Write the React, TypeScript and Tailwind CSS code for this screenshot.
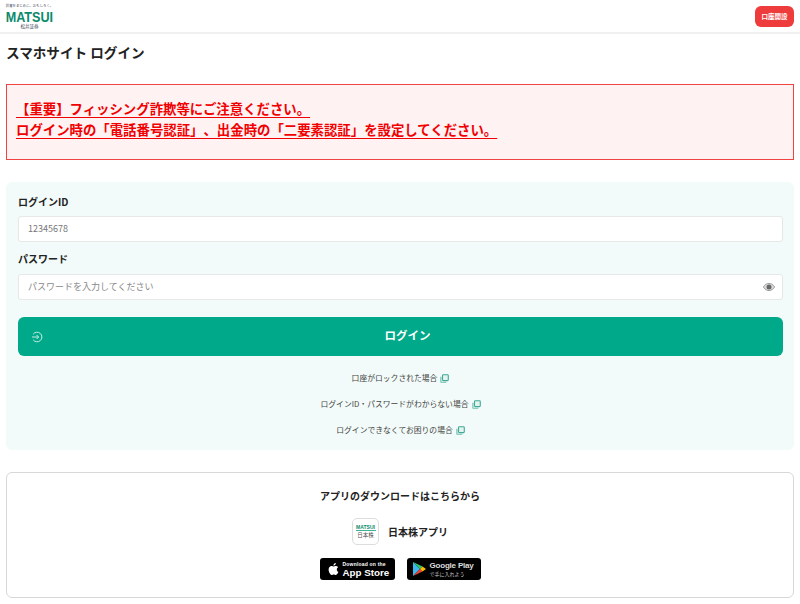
import React from 'react';

const FONT = "font-['Noto_Sans_CJK_JP','Liberation_Sans',sans-serif]";

const CopyIcon = () => (
  <svg className="w-[9px] h-[9px] ml-[3px] inline-block" viewBox="0 0 10 10" fill="none">
    <path d="M1 3v5.500a.7.7 0 0 0 .7.7H7" stroke="#6fbfae" strokeWidth="1.300" />
    <rect x="2.800" y="0.800" width="6.400" height="6.600" rx="1" stroke="#3ea996" strokeWidth="1.200" fill="#e4f3ef" />
  </svg>
);

const LoginIcon = () => (
  <svg className="w-[12px] h-[12px]" viewBox="0 0 12 12" fill="none" stroke="#c8eee4" strokeWidth="1">
    <path d="M2.200 3.200A4.800 4.800 0 1 1 2.200 8.800" />
    <path d="M1 6h6.600M5.600 4l2 2-2 2" />
  </svg>
);

const EyeIcon = () => (
  <svg className="w-[12px] h-[8px]" viewBox="0 0 12 8">
    <path d="M0.400 4C2 1.400 4 .4 6 .4s4 1 5.600 3.600C10 6.600 8 7.600 6 7.600S2 6.600.4 4z" fill="#ddd" stroke="#888" strokeWidth="0.800" />
    <circle cx="6" cy="4" r="2.500" fill="#666" />
  </svg>
);

const Logo = () => (
  <div className="flex flex-col items-center w-[47px] self-start pt-[4px]">
    <span className="text-[3.300px] leading-[4px] tracking-[0.100px] text-gray-700 whitespace-nowrap">投資をまじめに、おもしろく。</span>
    <span className="mt-[2px] font-['Liberation_Sans'] font-bold text-[14px] leading-[14px] text-[#0b8a6c] [transform:scale(0.900,1.060)] whitespace-nowrap">MATSUI</span>
    <span className="text-[4.500px] leading-[5px] text-gray-700">松井証券</span>
  </div>
);

const links = ['口座がロックされた場合', 'ログインID・パスワードがわからない場合', 'ログインできなくてお困りの場合'];

export default function App() {
  return (
    <div className={`${FONT} [text-spacing-trim:space-all] bg-white text-[#222] h-[604px] overflow-hidden`}>
      {/* Header */}
      <header className="h-[34px] border-b-2 border-[#f0f0f0] flex items-center justify-between pl-[6px] pr-[6px]">
        <Logo />
        <button className="w-[39px] h-[21px] mt-[1px] rounded-[6px] bg-[#ee3b3b] text-white text-[6.500px] font-bold leading-none">口座開設</button>
      </header>

      <main className="px-[6px]">
        <h1 className="text-[13.600px] font-bold leading-[20px] mt-[8px]">スマホサイト ログイン</h1>

        {/* Alert */}
        <div className="mt-[22px] h-[76px] border border-[#ee4444] bg-[#fff2f3] px-[9px] flex flex-col justify-center pb-[6px] text-[13.400px] font-bold leading-[21px] text-[#f00000]">
          <p className="underline underline-offset-[3px] decoration-1">【重要】フィッシング詐欺等にご注意ください。</p>
          <p className="underline underline-offset-[3px] decoration-1">ログイン時の「電話番号認証」、出金時の「二要素認証」を設定してください。</p>
        </div>

        {/* Login form */}
        <section className="mt-[22px] h-[268px] rounded-[6px] bg-[#f2fbf9] pl-[12px] pr-[11px] pt-[12px]">
          <label className="block text-[10px] font-bold leading-[16px]">ログインID</label>
          <div className="mt-[6px] h-[26px] rounded-[3px] border border-[#e6e8e8] bg-white px-[9px] flex items-center text-[9px] text-[#777]">12345678</div>
          <label className="block mt-[9px] text-[10px] font-bold leading-[16px]">パスワード</label>
          <div className="mt-[7px] h-[26px] rounded-[3px] border border-[#e6e8e8] bg-white pl-[9px] pr-[7px] flex items-center justify-between text-[9px] text-[#888]">
            <span>パスワードを入力してください</span>
            <EyeIcon />
          </div>
          <button className="relative mt-[17px] w-full h-[39px] rounded-[6px] bg-[#00a98a] text-white text-[11.500px] font-bold flex items-center justify-center pl-[14px] pb-[1px]">
            <span className="absolute left-[13px] top-[14px]"><LoginIcon /></span>
            ログイン
          </button>
          <ul className="mt-[14px] flex flex-col gap-[10px] text-[7.800px] text-[#444] leading-[16px] text-center">
            {links.map(l => (
              <li key={l}>{l}<CopyIcon /></li>
            ))}
          </ul>
        </section>

        {/* App download */}
        <section className="mt-[22px] h-[126px] rounded-[6px] border border-[#d8d8d8] flex flex-col items-center pt-[15px]">
          <p className="text-[10px] font-bold leading-[16px]">アプリのダウンロードはこちらから</p>
          <div className="mt-[14px] flex items-center gap-[9px]">
            <div className="w-[27px] h-[27px] rounded-[5px] border border-[#ddd] bg-white flex flex-col items-center justify-center">
              <span className="font-['Liberation_Sans'] font-bold text-[5px] leading-[6px] text-[#0b8a6c]">MATSUI</span>
              <span className="w-[20px] h-[1px] bg-[#3cb39a]"></span>
              <span className="text-[5.500px] leading-[8px] text-[#555]">日本株</span>
            </div>
            <span className="text-[10px] font-bold">日本株アプリ</span>
          </div>
          <div className="mt-[13px] flex gap-[12px]">
            <div className="w-[75px] h-[22px] rounded-[3px] bg-black text-white flex items-center pl-[7px] gap-[4px]">
              <svg className="w-[12px] h-[14px] shrink-0" viewBox="0 0 24 28" fill="#fff">
                <path d="M19.600 14.800c0-3 2.400-4.400 2.600-4.500-1.400-2.100-3.600-2.400-4.400-2.400-1.900-.2-3.600 1.100-4.600 1.100-1 0-2.400-1.100-4-1-2 0-3.900 1.200-5 3-2.100 3.700-.5 9.200 1.500 12.200 1 1.500 2.200 3.100 3.800 3 1.500-.1 2.100-1 3.900-1 1.800 0 2.400 1 4 1 1.600 0 2.700-1.500 3.700-3 1.200-1.700 1.700-3.400 1.700-3.500-.1 0-3.300-1.200-3.200-4.900z" />
                <path d="M16.500 5.600c.8-1 1.400-2.400 1.200-3.800-1.200 0-2.700.8-3.500 1.800-.8.9-1.400 2.300-1.300 3.700 1.400.1 2.800-.7 3.600-1.700z" />
              </svg>
              <div className="flex flex-col font-['Liberation_Sans'] whitespace-nowrap">
                <span className="text-[5px] leading-[6px] font-bold tracking-[0.200px]">Download on the</span>
                <span className="text-[9.800px] leading-[11px] font-bold">App Store</span>
              </div>
            </div>
            <div className="w-[74px] h-[22px] rounded-[3px] bg-black text-white flex items-center pl-[5px] gap-[4px]">
              <svg className="w-[14px] h-[16px] shrink-0" viewBox="0 0 14 16">
                <path d="M1 1v14l7-7z" fill="#3bb6f0" />
                <path d="M1 1l7 7 2.500-2.500z" fill="#34c46a" />
                <path d="M1 15l7-7 2.500 2.500z" fill="#ea4335" />
                <path d="M10.500 5.500L8 8l2.500 2.500L14 8z" fill="#fbbc04" />
              </svg>
              <div className="flex flex-col font-['Liberation_Sans','Noto_Sans_CJK_JP'] whitespace-nowrap">
                <span className="text-[8px] leading-[10px] font-bold tracking-[-0.200px] text-[#ddd]">Google Play</span>
                <span className="text-[5px] leading-[6px] text-[#ccc]">で手に入れよう</span>
              </div>
            </div>
          </div>
        </section>
      </main>
    </div>
  );
}
